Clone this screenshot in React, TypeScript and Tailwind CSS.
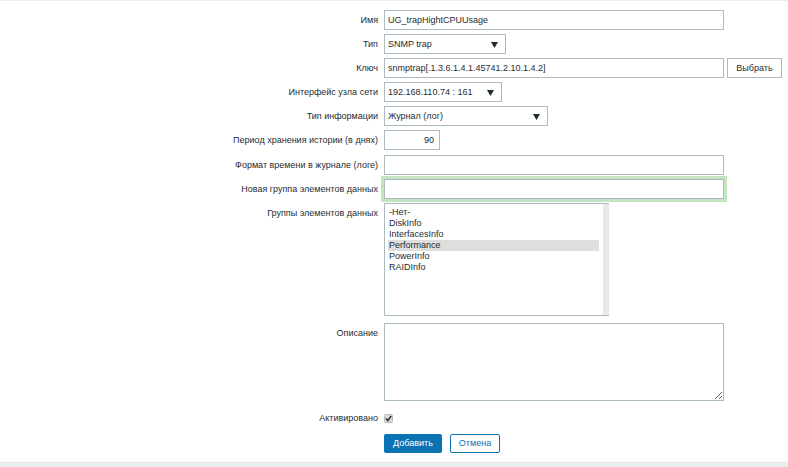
import React from "react";

const Arrow = () => (
  <svg width="7" height="6" viewBox="0 0 7 6" className="absolute right-[7px] top-[7px]">
    <path d="M0 0h7L3.5 6z" fill="#1f2c33" />
  </svg>
);

const Label: React.FC<{ children: React.ReactNode }> = ({ children }) => (
  <div className="w-[378px] shrink-0 text-right leading-[14px] pt-[3px]">{children}</div>
);

const TextBox: React.FC<{ value?: string; w: string; focus?: boolean; right?: boolean }> = ({ value, w, focus, right }) => (
  <div
    className={`${w} h-[20px] border border-[#acbbc2] bg-white px-[3px] leading-[18px] text-[#1f2c33] ${
      focus ? "shadow-[0_0_0_3px_#c4e3c0]" : ""
    } ${right ? "text-right pr-[5px]" : ""}`}
  >
    {value}
  </div>
);

const Select: React.FC<{ value: string; w: string }> = ({ value, w }) => (
  <div className={`${w} relative h-[20px] border border-[#acbbc2] bg-white px-[3px] leading-[18px]`}>
    {value}
    <Arrow />
  </div>
);

const groups = ["-Нет-", "DiskInfo", "InterfacesInfo", "Performance", "PowerInfo", "RAIDInfo"];

export default function App() {
  return (
    <div className="w-[788px] h-[467px] flex flex-col bg-white text-[9px] text-[#1f2c33] font-['Liberation_Sans',Arial,sans-serif] border-t border-[#ebeef0]">
      <div className="flex-1 flex flex-col pt-[9px]">
        {/* Имя */}
        <div className="flex gap-[6px]">
          <Label>Имя</Label>
          <TextBox value="UG_trapHightCPUUsage" w="w-[340px]" />
        </div>
        {/* Тип */}
        <div className="flex gap-[6px] mt-[4px]">
          <Label>Тип</Label>
          <Select value="SNMP trap" w="w-[122px]" />
        </div>
        {/* Ключ */}
        <div className="flex gap-[6px] mt-[4px]">
          <Label>Ключ</Label>
          <TextBox value="snmptrap[.1.3.6.1.4.1.45741.2.10.1.4.2]" w="w-[340px]" />
          <button className="-ml-[3px] h-[20px] w-[55px] border border-[#acbbc2] bg-white text-[9px] leading-[18px] text-[#1f2c33]">
            Выбрать
          </button>
        </div>
        {/* Интерфейс */}
        <div className="flex gap-[6px] mt-[4px]">
          <Label>Интерфейс узла сети</Label>
          <Select value="192.168.110.74 : 161" w="w-[118px]" />
        </div>
        {/* Тип информации */}
        <div className="flex gap-[6px] mt-[4px]">
          <Label>Тип информации</Label>
          <Select value="Журнал (лог)" w="w-[164px]" />
        </div>
        {/* Период */}
        <div className="flex gap-[6px] mt-[4px]">
          <Label>Период хранения истории (в днях)</Label>
          <TextBox value="90" w="w-[56px]" right />
        </div>
        {/* Формат */}
        <div className="flex gap-[6px] mt-[5px]">
          <Label>Формат времени в журнале (логе)</Label>
          <TextBox w="w-[340px]" />
        </div>
        {/* Новая группа */}
        <div className="flex gap-[6px] mt-[4px]">
          <Label>Новая группа элементов данных</Label>
          <TextBox w="w-[340px]" focus />
        </div>
        {/* Группы */}
        <div className="flex gap-[6px] mt-[4px]">
          <Label>Группы элементов данных</Label>
          <div className="w-[225px] h-[113px] border border-[#acbbc2] border-r-0 bg-white flex">
            <div className="flex-1 pl-[3px] pr-[4px] pt-[3px]">
              {groups.map((g) => (
                <div
                  key={g}
                  className={`h-[11px] leading-[11px] px-[1px] ${g === "Performance" ? "bg-[#dfdedc]" : ""}`}
                >
                  {g}
                </div>
              ))}
            </div>
            <div className="w-[6px] bg-[#e8e8e8]" />
          </div>
        </div>
        {/* Описание */}
        <div className="flex gap-[6px] mt-[7px]">
          <Label>Описание</Label>
          <textarea
            readOnly
            className="w-[340px] h-[78px] border border-[#acbbc2] bg-white outline-none"
          />
        </div>
        {/* Активировано */}
        <div className="flex gap-[6px] mt-[10px] items-center">
          <div className="w-[378px] shrink-0 text-right leading-[14px]">Активировано</div>
          <svg width="9" height="9" viewBox="0 0 9 9">
            <rect x="0.5" y="0.5" width="8" height="8" rx="1" fill="#dcdcdc" stroke="#b8b8b8" />
            <path d="M2 4.6l1.8 2L7.2 2" fill="none" stroke="#1f2c33" strokeWidth="1.5" />
          </svg>
        </div>
        {/* Кнопки */}
        <div className="flex gap-[8px] mt-[9px] pl-[384px]">
          <button className="h-[19px] w-[58px] rounded-[2px] bg-[#0b72b3] text-white leading-[19px]">Добавить</button>
          <button className="h-[19px] w-[50px] rounded-[2px] border border-[#0b72b3] bg-white text-[#0b72b3] leading-[17px]">
            Отмена
          </button>
        </div>
      </div>
      <div className="h-[5px] bg-[#ebeef0] border-t border-[#dfe4e7]" />
    </div>
  );
}
